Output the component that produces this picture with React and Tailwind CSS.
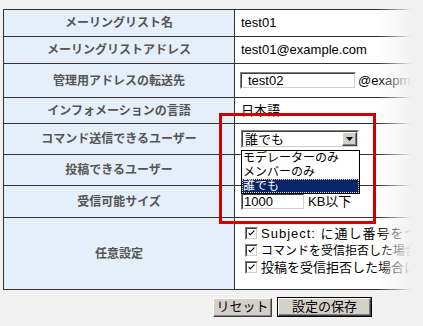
import React from "react";

const labelCls =
  "border border-[#333] bg-[#e5eff9] text-center text-[12px] font-bold text-[#555] p-0";
const valueCls =
  "border border-[#333] bg-white pl-[6px] pr-0 py-0 text-[13px] font-normal text-black";

const Sunken = ({ className, children }) => (
  <div
    className={
      "border border-t-[#808080] border-l-[#808080] border-r-white border-b-white " +
      className
    }
  >
    <div className="flex h-full items-center border border-t-[#404040] border-l-[#404040] border-r-[#d4d0c8] border-b-[#d4d0c8] bg-white">
      {children}
    </div>
  </div>
);

const Raised = ({ className, children }) => (
  <div
    className={
      "flex items-center justify-center border border-t-white border-l-white border-r-[#404040] border-b-[#404040] bg-[#d4d0c8] shadow-[inset_-1px_-1px_0_#808080] " +
      className
    }
  >
    {children}
  </div>
);

const Check = ({ children, className }) => (
  <div className="flex h-[17px] items-center gap-[3px]">
    <Sunken className="h-[13px] w-[13px] shrink-0">
      <svg width="11" height="11" viewBox="0 0 11 11">
        <path d="M2 4 L4 6 L9 1 L9 3 L4 8 L2 6 Z" fill="#000" />
      </svg>
    </Sunken>
    <span className={"whitespace-nowrap font-normal " + className}>{children}</span>
  </div>
);

const Select = ({ value }) => (
  <Sunken className="h-[18px] w-[118px]">
    <span className="flex-1 pl-[2px] text-[13px] font-normal leading-none">{value}</span>
    <Raised className="h-[14px] w-[15px] shrink-0">
      <svg width="7" height="4" viewBox="0 0 7 4">
        <path d="M0 0 H7 L3.5 4 Z" fill="#000" />
      </svg>
    </Raised>
  </Sunken>
);

export default function App() {
  return (
    <div className="relative h-[326px] w-[423px] overflow-hidden bg-[#f1f1f1] font-['Liberation_Sans','Noto_Sans_CJK_JP',sans-serif]">
      <div className="pl-[3px] pt-[9px]">
        <table className="w-[460px] table-fixed border-collapse">
          <colgroup>
            <col className="w-[231px]" />
            <col />
          </colgroup>
          <tbody>
            <tr>
              <td className={labelCls + " h-[27px]"}>メーリングリスト名</td>
              <td className={valueCls}>test01</td>
            </tr>
            <tr>
              <td className={labelCls + " h-[27px]"}>メーリングリストアドレス</td>
              <td className={valueCls}>test01@example.com</td>
            </tr>
            <tr>
              <td className={labelCls + " h-[34px]"}>管理用アドレスの転送先</td>
              <td className={valueCls}>
                <div className="flex items-center">
                  <Sunken className="ml-[-1px] h-[17px] w-[116px]">
                    <span className="pl-[6px] text-[13px] leading-none">test02</span>
                  </Sunken>
                  <span className="ml-[2px]">@exapmle</span>
                </div>
              </td>
            </tr>
            <tr>
              <td className={labelCls + " h-[26px]"}>インフォメーションの言語</td>
              <td className={valueCls}>日本語</td>
            </tr>
            <tr>
              <td className={labelCls + " h-[31px]"}>コマンド送信できるユーザー</td>
              <td className={valueCls}>
                <div className="relative w-[118px]">
                  <Select value="誰でも" />
                  <div className="absolute left-0 top-[20px] z-10 w-[119px] border border-black bg-white text-[12px] font-normal leading-[14px]">
                    <div className="h-[14px] pl-[1px]">モデレーターのみ</div>
                    <div className="h-[14px] pl-[1px]">メンバーのみ</div>
                    <div className="h-[14px] border border-dotted border-[#e8d890] bg-[#0a246a] leading-[12px] text-white">
                      誰でも
                    </div>
                  </div>
                </div>
              </td>
            </tr>
            <tr>
              <td className={labelCls + " h-[31px]"}>投稿できるユーザー</td>
              <td className={valueCls}></td>
            </tr>
            <tr>
              <td className={labelCls + " h-[32px]"}>受信可能サイズ</td>
              <td className={valueCls}>
                <div className="flex items-center">
                  <Sunken className="h-[17px] w-[64px]">
                    <span className="pl-[1px] text-[13px] leading-none">1000</span>
                  </Sunken>
                  <span className="ml-[3px]">KB以下</span>
                </div>
              </td>
            </tr>
            <tr>
              <td className={labelCls + " h-[72px]"}>任意設定</td>
              <td className={valueCls + " pl-[10px] pt-[7px] align-top"}>
                <div className="flex flex-col">
                  <Check className="tracking-[1px]">Subject: に通し番号をつける</Check>
                  <Check className="text-[12px]">コマンドを受信拒否した場合に通知する</Check>
                  <Check>投稿を受信拒否した場合に通知する</Check>
                </div>
              </td>
            </tr>
          </tbody>
        </table>
        <div className="mt-[7px] flex items-center gap-[5px] pl-[210px] text-[13px]">
          <Raised className="h-[19px] w-[59px]">リセット</Raised>
          <div className="border border-black">
            <Raised className="h-[18px] w-[93px]">設定の保存</Raised>
          </div>
        </div>
      </div>

      <div className="absolute left-[219px] top-[113px] z-20 h-[111px] w-[157px] border-[3px] border-[#cc0000]" />
      <div className="absolute bottom-0 left-[378px] right-0 top-0 z-30 bg-linear-to-r from-transparent to-[#f1f1f1] to-75%" />
    </div>
  );
}
